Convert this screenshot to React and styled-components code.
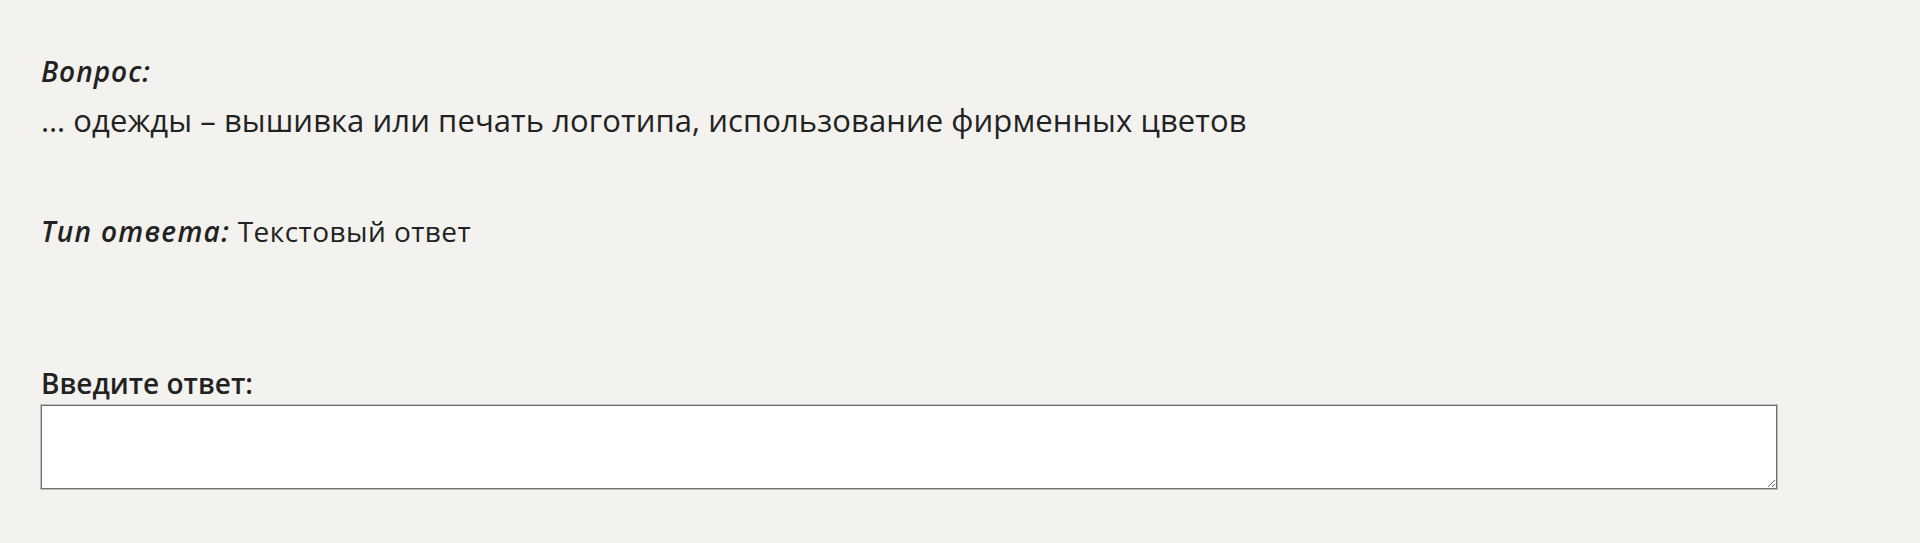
import React from "react";
import styled, { createGlobalStyle } from "styled-components";

const Global = createGlobalStyle`
  html, body { margin: 0; padding: 0; background: #f3f2ef; }
  body { font-family: "Open Sans", "Noto Sans", sans-serif; color: #222222; }
`;

const Page = styled.main`
  padding: 51px 40px 40px 41px;
`;

const Block = styled.section`
  margin-bottom: ${(p) => p.$gap || 0}px;
`;

const Label = styled.span`
  display: ${(p) => (p.$block ? "block" : "inline")};
  font-style: italic;
  font-weight: 600;
  font-size: 28px;
  line-height: 40px;
  letter-spacing: ${(p) => (p.$block ? 1 : 1.3)}px;
`;

const QuestionText = styled.p`
  margin: 9px 0 0;
  font-size: 31px;
  line-height: 40px;
  letter-spacing: 0.08px;
`;

const Line = styled.p`
  margin: 0;
  font-size: 28px;
  line-height: 40px;
  letter-spacing: 0.45px;
`;

const FieldLabel = styled.label`
  display: block;
  font-weight: 600;
  font-size: 28px;
  line-height: 40px;
`;

const Answer = styled.textarea`
  display: block;
  box-sizing: border-box;
  width: 1736px;
  height: 84px;
  margin: 2px 0 0;
  border: 1px solid #707070;
  box-shadow: 0 0 0 1px #bdbdbd;
  background: #ffffff;
  font-family: inherit;
  font-size: 20px;
`;

export default function App() {
  return (
    <>
      <Global />
      <Page>
        <Block $gap={71}>
          <Label $block>Вопрос:</Label>
          <QuestionText>… одежды – вышивка или печать логотипа, использование фирменных цветов</QuestionText>
        </Block>
        <Block $gap={112}>
          <Line>
            <Label>Тип ответа:</Label> Текстовый ответ
          </Line>
        </Block>
        <Block>
          <FieldLabel>Введите ответ:</FieldLabel>
          <Answer />
        </Block>
      </Page>
    </>
  );
}
